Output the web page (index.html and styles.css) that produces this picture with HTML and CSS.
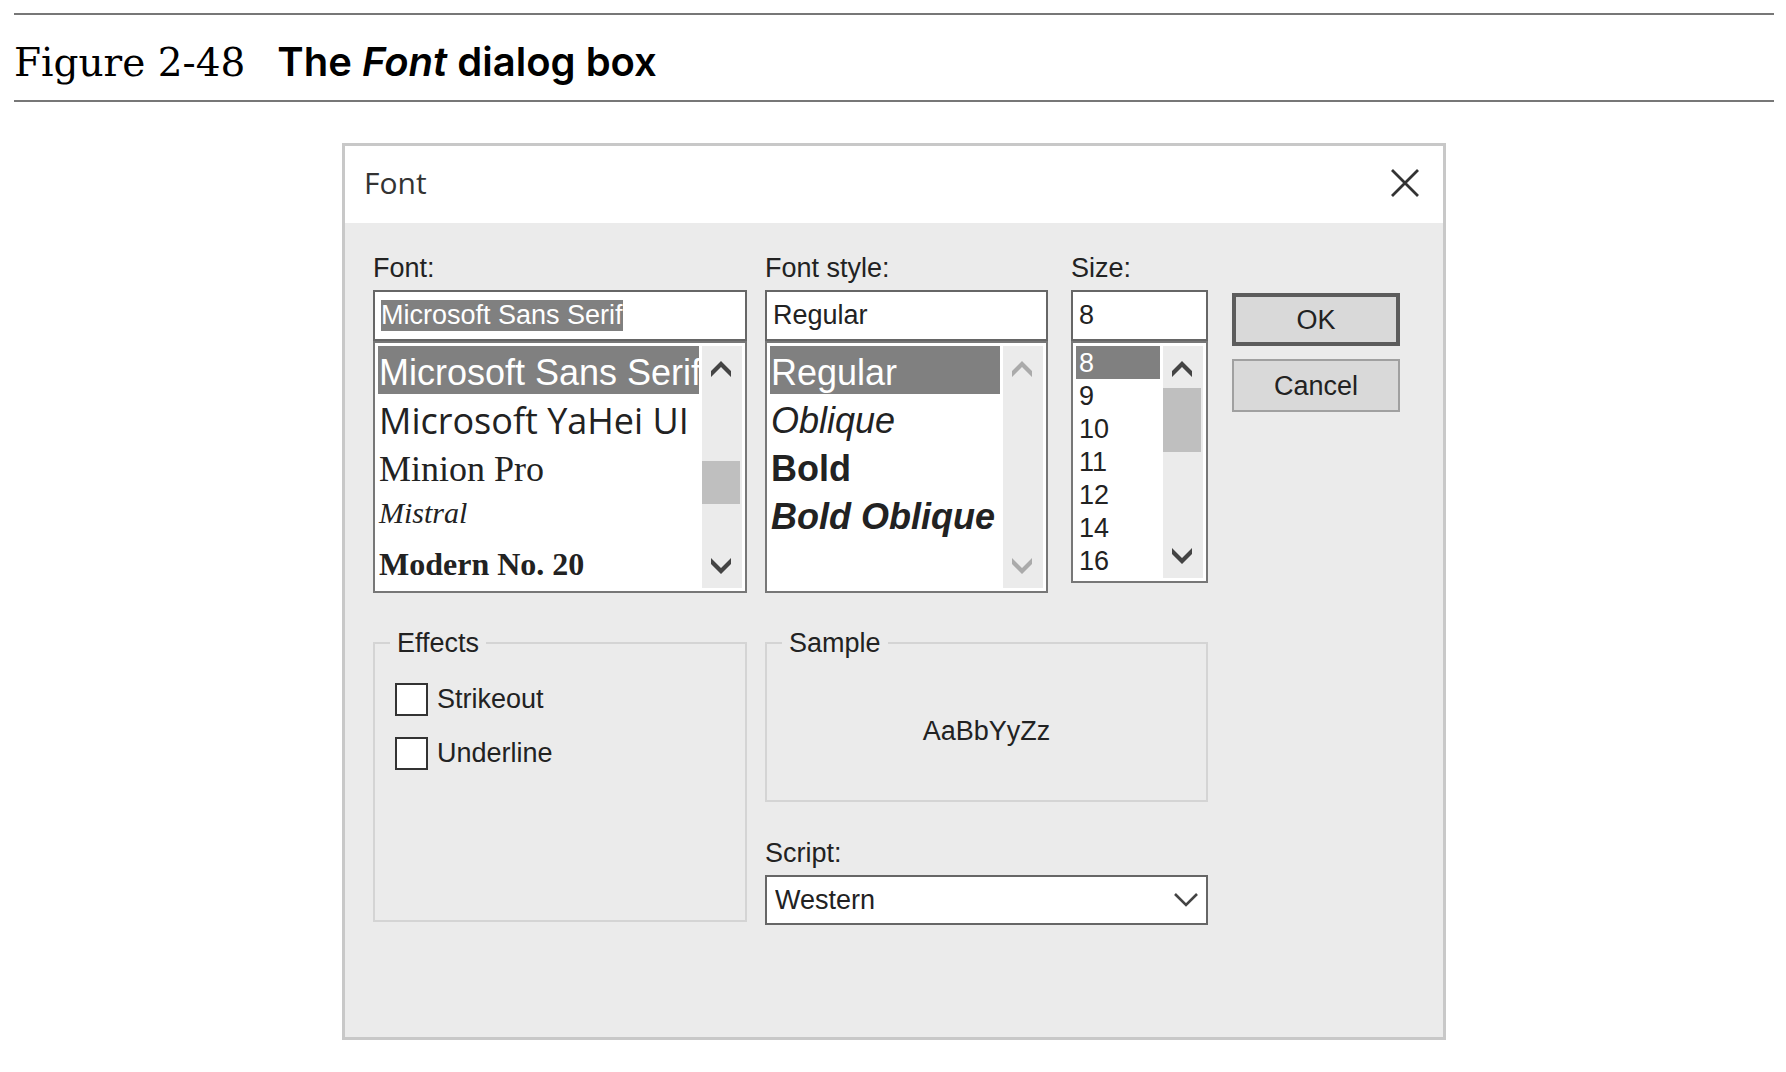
FILE: index.html
```html
<!DOCTYPE html>
<html lang="en">
<head>
<meta charset="utf-8">
<meta name="viewport" content="width=device-width, initial-scale=1">
<title>Figure 2-48 The Font dialog box</title>
<link rel="stylesheet" href="styles.css">
</head>
<body>
<figure class="figure">
  <figcaption class="caption">
    <span class="caption-number">Figure 2-48</span>
    <span class="caption-title">The <em>Font</em> dialog box</span>
  </figcaption>

  <form class="dialog" role="dialog" aria-labelledby="dialog-title">
    <header class="titlebar">
      <h1 class="title" id="dialog-title">Font</h1>
      <button class="close" type="button" aria-label="Close">
        <svg width="28" height="28" viewBox="0 0 28 28" fill="none" stroke="#333" stroke-width="2.8"><path d="M1 1 27 27M27 1 1 27"/></svg>
      </button>
    </header>

    <div class="body">
      <div class="picker">
        <label class="label" for="font-name">Font:</label>
        <input class="entry" id="font-name" type="text" value="Microsoft Sans Serif">
        <div class="list">
          <select class="options" size="5" aria-label="Fonts">
            <option class="sans" selected>Microsoft Sans Serif</option>
            <option class="humanist">Microsoft YaHei UI</option>
            <option class="roman">Minion Pro</option>
            <option class="script">Mistral</option>
            <option class="modern">Modern No. 20</option>
          </select>
          <div class="scrollbar">
            <button class="arrow" type="button" aria-label="Scroll fonts up"><svg width="20" height="16" viewBox="0 0 20 16"><path d="M10 0 20 10V16L10 6 0 16V10Z"/></svg></button>
            <div class="track"><div class="thumb thumb-font"></div></div>
            <button class="arrow" type="button" aria-label="Scroll fonts down"><svg width="20" height="16" viewBox="0 0 20 16"><path d="M10 16 20 6V0L10 10 0 0V6Z"/></svg></button>
          </div>
        </div>
      </div>

      <div class="picker">
        <label class="label" for="font-style">Font style:</label>
        <input class="entry" id="font-style" type="text" value="Regular">
        <div class="list">
          <select class="options" size="5" aria-label="Font styles">
            <option class="sans" selected>Regular</option>
            <option class="sans oblique">Oblique</option>
            <option class="sans bold">Bold</option>
            <option class="sans bold oblique">Bold Oblique</option>
          </select>
          <div class="scrollbar">
            <button class="arrow" type="button" disabled aria-label="Scroll styles up"><svg width="20" height="16" viewBox="0 0 20 16"><path d="M10 0 20 10V16L10 6 0 16V10Z"/></svg></button>
            <div class="track"></div>
            <button class="arrow" type="button" disabled aria-label="Scroll styles down"><svg width="20" height="16" viewBox="0 0 20 16"><path d="M10 16 20 6V0L10 10 0 0V6Z"/></svg></button>
          </div>
        </div>
      </div>

      <div class="picker picker-size">
        <label class="label" for="font-size">Size:</label>
        <input class="entry" id="font-size" type="text" value="8">
        <div class="list">
          <select class="options options-size" size="7" aria-label="Sizes">
            <option selected>8</option>
            <option>9</option>
            <option>10</option>
            <option>11</option>
            <option>12</option>
            <option>14</option>
            <option>16</option>
          </select>
          <div class="scrollbar">
            <button class="arrow" type="button" aria-label="Scroll sizes up"><svg width="20" height="16" viewBox="0 0 20 16"><path d="M10 0 20 10V16L10 6 0 16V10Z"/></svg></button>
            <div class="track"><div class="thumb thumb-size"></div></div>
            <button class="arrow" type="button" aria-label="Scroll sizes down"><svg width="20" height="16" viewBox="0 0 20 16"><path d="M10 16 20 6V0L10 10 0 0V6Z"/></svg></button>
          </div>
        </div>
      </div>

      <div class="actions">
        <button class="button button-default" type="button">OK</button>
        <button class="button" type="button">Cancel</button>
      </div>

      <fieldset class="group effects">
        <legend>Effects</legend>
        <div class="checks">
          <label class="check"><input type="checkbox">Strikeout</label>
          <label class="check"><input type="checkbox">Underline</label>
        </div>
      </fieldset>

      <div class="preview">
        <fieldset class="group sample">
          <legend>Sample</legend>
          <p class="sample-text">AaBbYyZz</p>
        </fieldset>
        <label class="label" for="script">Script:</label>
        <div class="dropdown">
          <select id="script"><option>Western</option></select>
          <svg width="24" height="14" viewBox="0 0 24 14" fill="none" stroke="#444" stroke-width="2.6"><path d="M1 1 12 12 23 1"/></svg>
        </div>
      </div>
    </div>
  </form>
</figure>
<script src="script.js"></script>
</body>
</html>
```
FILE: styles.css
```css
* {
  box-sizing: border-box;
}

body {
  margin: 0;
  background: #fff;
  color: #222;
  font: 27px/40px "Liberation Sans", sans-serif;
}

button,
input,
select {
  margin: 0;
  border-radius: 0;
  color: inherit;
  font: inherit;
  outline: none;
}

.figure {
  margin: 0;
  padding: 13px 12px 32px 14px;
}

/* Caption between two rules */
.caption {
  display: flex;
  align-items: baseline;
  gap: 32px;
  padding: 23px 0 13px;
  border-top: 2px solid #777;
  border-bottom: 2px solid #777;
  color: #000;
  line-height: 48px;
}

.caption-number {
  font-family: "DejaVu Serif", serif;
  font-size: 39px;
}

.caption-title {
  font-family: Inter, "Liberation Sans", sans-serif;
  font-size: 40px;
  font-weight: 600;
}

/* Dialog window */
.dialog {
  width: 100%;
  max-width: 1104px;
  margin: 41px auto 0;
  border: 3px solid #c8c8c8;
  background: #ebebeb;
}

.titlebar {
  display: flex;
  align-items: center;
  justify-content: space-between;
  padding: 17px 24px 20px 19px;
  background: #fff;
}

.title {
  margin: 0;
  color: #333;
  font: 30px/40px "Open Sans", sans-serif;
}

.close {
  display: flex;
  padding: 0;
  border: 0;
  background: none;
}

.body {
  display: grid;
  grid-template-columns: minmax(0, 374fr) minmax(0, 283fr) minmax(0, 142fr) minmax(0, 174fr);
  gap: 32px 18px;
  padding: 27px 43px 112px 28px;
}

.label {
  display: block;
  padding-bottom: 4px;
  line-height: 36px;
}

.picker-size {
  padding-left: 5px;
}

.entry {
  display: block;
  width: 100%;
  height: 51px;
  padding: 0 6px;
  border: 2px solid #666;
  background: #fff;
}

.entry::selection {
  background: #808080;
  color: #fff;
}

.list {
  display: flex;
  gap: 3px;
  padding: 3px;
  border: 2px solid #777;
  background: #fff;
}

.options {
  flex: 1;
  min-width: 0;
  height: 242px;
  padding: 0;
  border: 0;
  background: #fff;
  overflow: hidden;
  scrollbar-width: none;
}

.options option {
  height: 48px;
  padding: 6px 1px 0;
  font-size: 36px;
  overflow: hidden;
}

.options option:checked {
  background: linear-gradient(#808080, #808080);
  -webkit-text-fill-color: #fff;
}

.options-size {
  height: 232px;
}

.options-size option {
  height: 33px;
  min-height: 33px;
  padding: 2px 3px 0;
  font-size: 27px;
}

.options .sans {
  font-family: "Liberation Sans", sans-serif;
}

.options .humanist {
  padding-top: 2px;
  font-family: "Open Sans", sans-serif;
}

.options .roman {
  font-family: "Liberation Serif", serif;
}

.options .script {
  font-family: "Liberation Serif", serif;
  font-size: 30px;
  font-style: italic;
}

.options .modern {
  padding-top: 8px;
  font-family: "Liberation Serif", serif;
  font-size: 32px;
  font-weight: 700;
}

.options .bold {
  font-weight: 700;
}

.options .oblique {
  font-style: italic;
}

.scrollbar {
  display: flex;
  flex-direction: column;
  width: 40px;
  background: #ebebeb;
}

.arrow {
  display: grid;
  place-items: center;
  height: 42px;
  padding: 4px 2px 0 0;
  border: 0;
  background: none;
  fill: #444;
}

.arrow:last-child {
  padding: 0 2px 2px 0;
}

.arrow:disabled {
  fill: #aaa;
}

.track {
  flex: 1;
}

.thumb {
  width: 38px;
  background: #bfbfbf;
}

.thumb-font {
  height: 43px;
  margin-top: 73px;
}

.thumb-size {
  height: 64px;
}

.actions {
  display: flex;
  flex-direction: column;
  gap: 13px;
  padding: 43px 0 0 6px;
}

.button {
  height: 53px;
  padding: 0;
  border: 2px solid #a0a0a0;
  background: #d9d9d9;
}

.button-default {
  border: 4px solid #5c5c5c;
}

.group {
  min-width: 0;
  margin: 0;
  padding: 0;
  border: 2px solid #d4d4d4;
}

.group legend {
  margin-left: 15px;
  padding: 0 7px;
  line-height: 36px;
}

.effects {
  height: 297px;
}

.checks {
  display: grid;
  gap: 21px;
  padding: 22px 20px;
}

.check {
  display: flex;
  align-items: center;
  gap: 9px;
  line-height: 33px;
}

.check input {
  width: 33px;
  height: 33px;
  border: 2px solid #333;
  background: #fff;
  appearance: none;
}

.preview {
  grid-column: span 2;
}

.sample {
  height: 177px;
  margin-bottom: 33px;
}

.sample-text {
  margin: 0;
  padding-top: 50px;
  text-align: center;
}

.dropdown {
  display: grid;
  align-items: center;
}

.dropdown > * {
  grid-area: 1 / 1;
}

.dropdown select {
  width: 100%;
  height: 50px;
  padding: 0 40px 0 8px;
  border: 2px solid #666;
  background: #fff;
  appearance: none;
}

.dropdown svg {
  justify-self: end;
  margin-right: 10px;
  pointer-events: none;
}
```
FILE: script.js
```js
// Open with the font name selected, ready to be typed over.
const fontName = document.getElementById("font-name");
fontName.focus();
fontName.select();
```
